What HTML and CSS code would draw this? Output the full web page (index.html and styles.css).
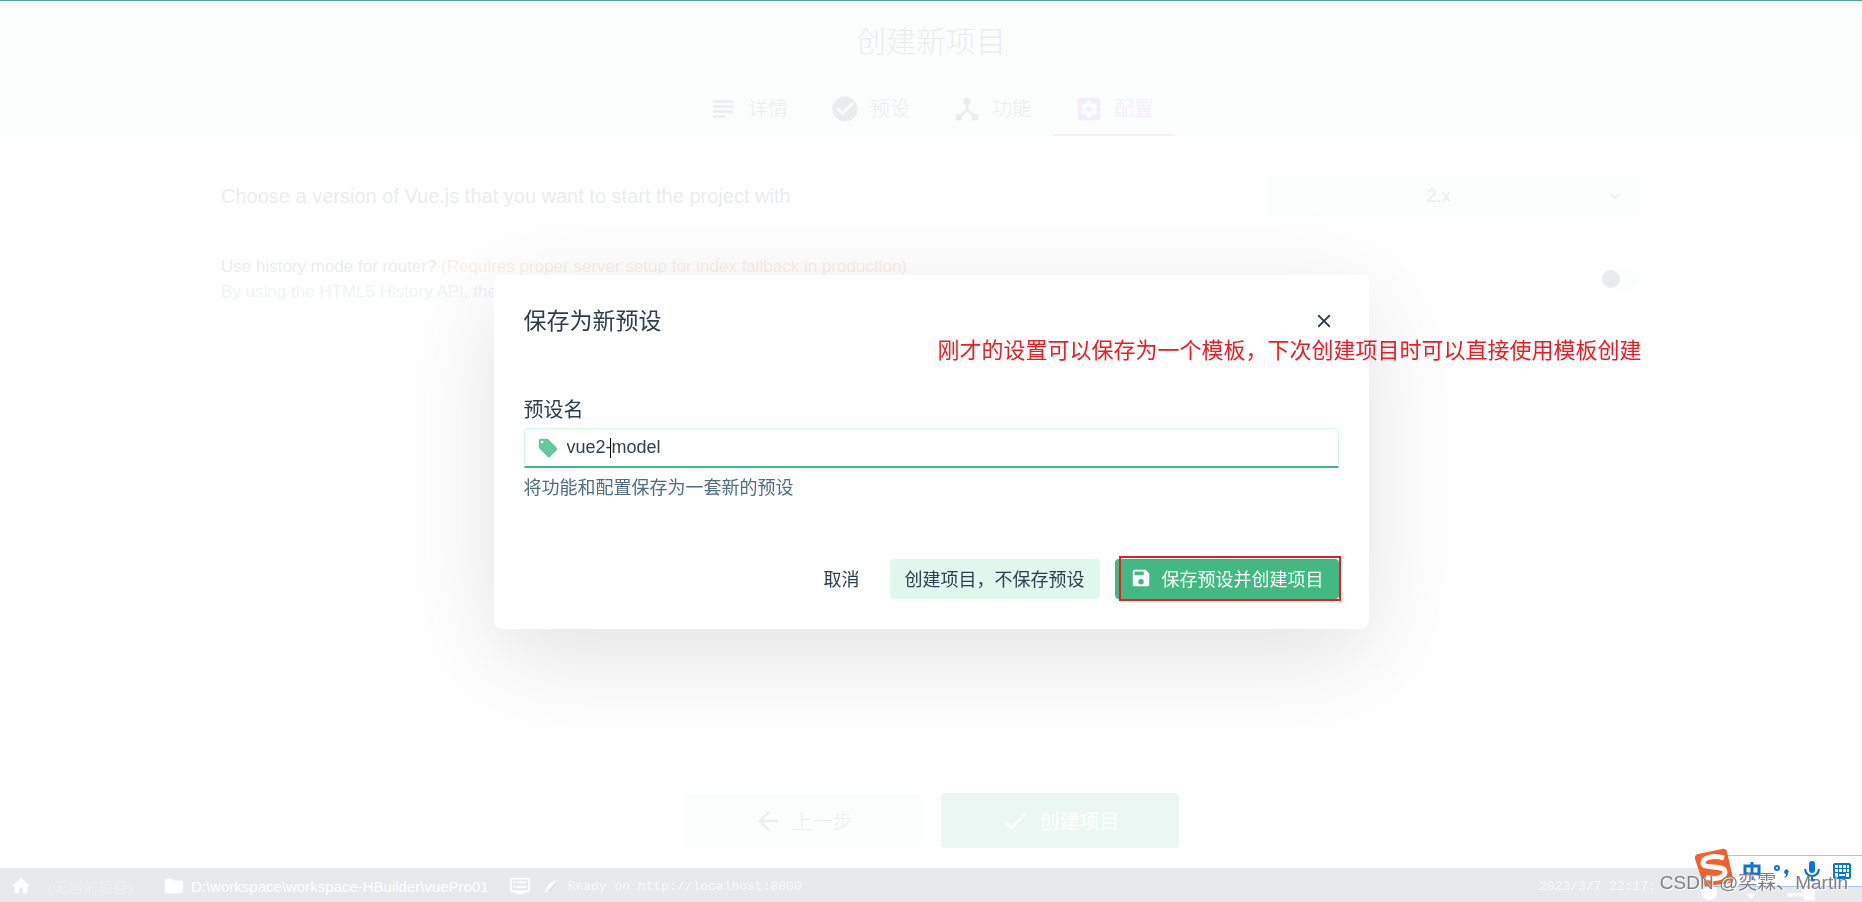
FILE: index.html
```html
<!DOCTYPE html>
<html lang="zh-CN">
<head>
<meta charset="utf-8">
<title>创建新项目</title>
<link rel="stylesheet" href="styles.css">
</head>
<body>
<div class="app">
  <header class="header">
    <h1 class="title">创建新项目</h1>
    <nav class="tabs">
      <button class="tab" type="button"><svg class="icon-lg" viewBox="0 0 24 24"><path d="M4 5h16v2H4zM4 9h16v2H4zM4 13h16v2H4zM4 17h10v2H4z"/></svg><span>详情</span></button>
      <button class="tab" type="button"><svg class="icon-lg" viewBox="0 0 24 24"><path d="M12 2a10 10 0 1 0 0 20 10 10 0 0 0 0-20zm-2 15l-5-5 1.410-1.410L10 14.170l7.590-7.590L19 8z"/></svg><span>预设</span></button>
      <button class="tab" type="button"><svg class="icon-lg" viewBox="0 0 24 24"><path d="M17 16l-4-4V8.820C14.160 8.400 15 7.300 15 6c0-1.660-1.340-3-3-3S9 4.340 9 6c0 1.300.84 2.400 2 2.820V12l-4 4H3v5h5v-3.050l4-4.200 4 4.200V21h5v-5h-4z"/></svg><span>功能</span></button>
      <button class="tab tab-active" type="button"><svg class="icon-lg" viewBox="0 0 24 24"><path d="M12 10a2 2 0 1 0 0 4 2 2 0 0 0 0-4zm7-7H5a2 2 0 0 0-2 2v14a2 2 0 0 0 2 2h14a2 2 0 0 0 2-2V5a2 2 0 0 0-2-2zm-1.750 9c0 .23-.02.46-.05.68l1.480 1.160c.13.11.17.3.08.45l-1.400 2.420c-.09.15-.27.21-.43.15l-1.740-.7c-.36.28-.76.51-1.180.69l-.26 1.850c-.03.17-.18.3-.35.3h-2.800c-.17 0-.32-.13-.35-.29l-.26-1.850c-.43-.18-.82-.41-1.180-.69l-1.740.7c-.16.06-.34 0-.43-.15l-1.400-2.420a.35.35 0 0 1 .08-.45l1.480-1.160c-.03-.23-.05-.46-.05-.69s.02-.46.05-.68l-1.480-1.160a.35.35 0 0 1-.08-.45l1.400-2.420c.09-.15.27-.21.43-.15l1.740.7c.36-.28.76-.51 1.180-.69l.26-1.850c.03-.17.18-.3.35-.3h2.800c.17 0 .32.13.35.29l.26 1.850c.43.18.82.41 1.180.69l1.740-.7c.16-.06.34 0 .43.15l1.400 2.420c.09.15.05.34-.08.45l-1.480 1.160c.03.23.05.46.05.69z"/></svg><span>配置</span></button>
    </nav>
  </header>

  <main class="content">
    <div class="prompt">
      <label class="prompt-title" for="version">Choose a version of Vue.js that you want to start the project with</label>
      <div class="select-wrap">
        <select class="select" id="version"><option>2.x</option></select>
        <svg class="select-arrow" viewBox="0 0 24 24"><path d="M7.400 8.600L12 13.200l4.600-4.600L18 10l-6 6-6-6z"/></svg>
      </div>
    </div>
    <div class="prompt">
      <label class="prompt-text" for="history">
        <span class="line">Use history mode for router? <span class="warn">(Requires proper server setup for index fallback in production)</span></span>
        <span class="line muted">By using the HTML5 History API, the</span>
      </label>
      <input class="switch" type="checkbox" id="history">
    </div>
  </main>

  <div class="actions">
    <button class="big-button" type="button"><svg class="icon-lg" viewBox="0 0 24 24"><path d="M20 11H7.830l5.590-5.590L12 4l-8 8 8 8 1.410-1.410L7.830 13H20z"/></svg><span>上一步</span></button>
    <button class="big-button big-primary" type="button"><svg class="icon-lg" viewBox="0 0 24 24"><path d="M9 16.170L4.830 12l-1.420 1.410L9 19 21 7l-1.410-1.410z"/></svg><span>创建项目</span></button>
  </div>

  <footer class="status">
    <svg class="icon-md" viewBox="0 0 24 24"><path d="M10 20v-6h4v6h5v-8h3L12 3 2 12h3v8z"/></svg>
    <span class="no-project">(无当前项目)</span>
    <svg class="icon-md" viewBox="0 0 24 24"><path d="M10 4H4a2 2 0 0 0-2 2v12a2 2 0 0 0 2 2h16a2 2 0 0 0 2-2V8a2 2 0 0 0-2-2h-8z"/></svg>
    <span class="path">D:\workspace\workspace-HBuilder\vuePro01</span>
    <svg class="icon-md" viewBox="0 0 24 24"><path fill-rule="evenodd" d="M21 3H3a2 2 0 0 0-2 2v12a2 2 0 0 0 2 2h5v2h8v-2h5a2 2 0 0 0 2-2V5a2 2 0 0 0-2-2zm0 14H3V5h18zM5 7h2v2H5zM8 7h11v2H8zM5 12h2v2H5zM8 12h11v2H8z"/></svg>
    <svg class="pen" viewBox="0 0 16 16"><path class="pen-edge" d="M15 1L8 4 3 10l2 3z"/><path class="pen-body" d="M15 1L5 13l2 1 6-7z"/><path class="pen-tip" d="M3 10l-2 4 3 1 3-1z"/></svg>
    <span class="mono">Ready on http://localhost:8000</span>
    <span class="mono date">2023/3/7 22:17:</span>
    <div class="status-icons">
      <svg class="icon-md" viewBox="0 0 24 24"><path d="M12 3a9 9 0 1 0 0 18 9 9 0 0 0 0-18z"/></svg>
      <svg class="icon-md" viewBox="0 0 24 24"><path d="M12 20l-5-6h10z"/></svg>
      <svg class="icon-wide" viewBox="0 0 48 24"><path d="M6 13h16V8h14v13H24v-4H6z"/></svg>
    </div>
  </footer>
</div>

<div class="overlay">
  <section class="modal" role="dialog" aria-labelledby="modal-title">
    <div class="modal-head">
      <h2 class="modal-title" id="modal-title">保存为新预设</h2>
      <button class="close" type="button" aria-label="关闭"><svg class="icon-md" viewBox="0 0 24 24"><path d="M19 6.410L17.590 5 12 10.590 6.410 5 5 6.410 10.590 12 5 17.590 6.410 19 12 13.410 17.590 19 19 17.590 13.410 12z"/></svg></button>
    </div>
    <div class="field">
      <label class="field-label" for="preset">预设名</label>
      <div class="input-box">
        <svg class="icon-md tag" viewBox="0 0 24 24"><path d="M21.410 11.580l-9-9A2 2 0 0 0 11 2H4a2 2 0 0 0-2 2v7c0 .55.22 1.050.59 1.420l9 9a2 2 0 0 0 2.820 0l7-7a2 2 0 0 0 0-2.840zM5.500 7a1.500 1.500 0 1 1 0-3 1.500 1.500 0 0 1 0 3z"/></svg>
        <input class="input" id="preset" type="text" value="vue2-model">
        <span class="caret"></span>
      </div>
      <p class="hint">将功能和配置保存为一套新的预设</p>
    </div>
    <div class="modal-actions">
      <button class="button flat" type="button">取消</button>
      <button class="button soft" type="button">创建项目，不保存预设</button>
      <button class="button primary" type="button"><svg class="icon-md" viewBox="0 0 24 24"><path d="M17 3H5a2 2 0 0 0-2 2v14a2 2 0 0 0 2 2h14a2 2 0 0 0 2-2V7zm-5 16a3 3 0 1 1 0-6 3 3 0 0 1 0 6zm3-10H5V5h10z"/></svg><span>保存预设并创建项目</span><span class="mark"></span></button>
    </div>
    <p class="note">刚才的设置可以保存为一个模板，下次创建项目时可以直接使用模板创建</p>
  </section>
</div>

<div class="ime">
  <svg class="ime-logo" viewBox="0 0 40 40"><path class="logo-bg" d="M4 6L28 1q4-1 5 3l6 26q1 4-3 5L14 38q-4 1-5-3L1 11q-1-4 3-5z"/><path class="logo-s" d="M30 10C20 7 9 9 9 15C9 22 31 16 31 24C31 30 21 32 12 29"/></svg>
  <svg class="ime-icon" viewBox="0 0 20 20"><path class="stroke" d="M3 5h14v8H3zM10 1v18"/></svg>
  <svg class="ime-icon" viewBox="0 0 20 20"><circle class="stroke thin" cx="5" cy="7" r="2"/><path d="M13 9a2 2 0 1 1 3 3q0 4-4 5 2-2 2-4-2 0-2-2z"/></svg>
  <svg class="ime-icon" viewBox="0 0 20 20"><rect x="7" y="0" width="6" height="12" rx="3"/><path class="stroke thin" d="M3 8q1 7 7 7t7-7M10 15v4M7 19h6"/></svg>
  <svg class="ime-icon" viewBox="0 0 20 20"><path fill-rule="evenodd" d="M3 2h14a2 2 0 0 1 2 2v12a2 2 0 0 1-2 2H3a2 2 0 0 1-2-2V4a2 2 0 0 1 2-2zM3 4v3h3V4zM7 4v3h3V4zM11 4v3h3V4zM15 4v3h2V4zM3 8v3h3V8zM7 8v3h3V8zM11 8v3h3V8zM15 8v3h2V8zM3 12v4h3v-4zM7 13v2h6v-2zM14 12v4h3v-4z"/></svg>
</div>
<div class="watermark">CSDN @奕霖、Martin</div>
</body>
</html>
```

FILE: styles.css
```css
* { box-sizing: border-box; }

body {
  margin: 0;
  background: #fff;
  color: #ebecee;
  font-family: "Liberation Sans", "Noto Sans CJK SC", sans-serif;
  font-size: 18px;
}

button, input, select {
  margin: 0;
  border: 0;
  font: inherit;
  color: inherit;
  background: none;
}

h1, h2, p { margin: 0; font-weight: 300; }

svg { flex: none; fill: currentColor; }

.icon-lg { width: 30px; height: 30px; }
.icon-md { width: 22px; height: 22px; }
.icon-wide { width: 44px; height: 22px; }

.app {
  display: flex;
  flex-direction: column;
  min-height: 100vh;
}

.header {
  display: flex;
  flex-direction: column;
  align-items: center;
  gap: 20px;
  padding-top: 19px;
  border-top: 1px solid #4da0a0;
  background: #fbfdfc;
}

.title { font-size: 30px; line-height: 44px; }

.tabs { display: flex; }

.tab {
  display: flex;
  align-items: center;
  gap: 10px;
  padding: 10px 21px;
  border-bottom: 2px solid transparent;
  font-size: 20px;
  font-weight: 300;
  line-height: 30px;
}

.tab-active { color: #f4ebfd; border-color: #f6f0fd; }

.content {
  display: flex;
  flex: 1;
  flex-direction: column;
  gap: 38px;
  width: 100%;
  max-width: 1420px;
  margin: 0 auto;
  padding-top: 40px;
}

.prompt {
  display: flex;
  align-items: center;
  justify-content: space-between;
}

.prompt-title { font-size: 20px; }
.prompt-text { font-size: 17px; line-height: 25px; white-space: nowrap; }
.line { display: block; }
.warn { color: #fdefe6; }
.muted { color: #f0f3f6; }

.select-wrap { position: relative; width: 375px; }

.select {
  width: 100%;
  height: 40px;
  padding: 0 44px 0 14px;
  border-radius: 4px;
  background: #fcfefd;
  text-align-last: center;
  appearance: none;
}

.select-arrow {
  position: absolute;
  top: 10px;
  right: 16px;
  width: 20px;
  height: 20px;
}

.switch {
  display: flex;
  align-items: center;
  width: 40px;
  height: 20px;
  padding: 0 1px;
  border-radius: 10px;
  background: #fbfefd;
  appearance: none;
}

.switch::before {
  width: 18px;
  height: 18px;
  border-radius: 50%;
  background: #e9eaec;
  content: "";
}

.actions {
  display: flex;
  justify-content: center;
  gap: 19px;
  padding-bottom: 20px;
}

.big-button {
  display: flex;
  align-items: center;
  justify-content: center;
  gap: 10px;
  width: 238px;
  height: 55px;
  border-radius: 4px;
  background: #fcfefd;
  font-size: 20px;
  font-weight: 300;
}

.big-primary { background: #ebf7f2; color: #fff; font-weight: 400; }

.status {
  display: flex;
  align-items: center;
  height: 34px;
  padding: 2px 12px 0 10px;
  background: #e8e9eb;
  color: #fff;
  font-size: 15px;
}

.no-project { margin: 0 30px 0 16px; color: #eff0f1; }
.path { margin: 0 20px 0 6px; }
.pen { width: 15px; height: 15px; margin: 0 10px 0 12px; }
.pen-edge { fill: #fff; }
.pen-body { fill: #d6e4f3; }
.pen-tip { fill: #faf6dc; }

.mono {
  color: #f9f9fa;
  font-family: "Liberation Mono", monospace;
  font-size: 13px;
}

.date { margin-left: auto; }
.status-icons { display: flex; gap: 20px; margin: 12px 24px 0 42px; }

.overlay {
  position: fixed;
  inset: 0;
  display: grid;
  place-items: center;
  padding-top: 2px;
}

.modal {
  position: relative;
  width: 875px;
  max-width: 100%;
  padding: 30px;
  border-radius: 8px;
  background: #fff;
  box-shadow: 0 25px 100px rgba(0, 0, 0, 0.12);
  color: #2c3e50;
}

.modal-head {
  display: flex;
  align-items: center;
  justify-content: space-between;
}

.modal-title { font-size: 23px; font-weight: 400; line-height: 32px; }

.close {
  display: grid;
  place-items: center;
  width: 30px;
  height: 30px;
  padding: 0;
}

.field { padding: 58px 0 57px; }
.field-label { display: block; font-size: 20px; line-height: 30px; }

.input-box {
  position: relative;
  display: flex;
  align-items: center;
  gap: 8px;
  height: 40px;
  margin-top: 3px;
  padding: 0 12px;
  border: 1px solid #d9f5e8;
  border-bottom: 2px solid #42b983;
  border-radius: 4px 4px 0 0;
}

.tag { color: #68c79e; }
.input { flex: 1; height: 36px; padding: 0; outline: 0; }

.caret {
  position: absolute;
  top: 9px;
  left: 85px;
  width: 1px;
  height: 20px;
  background: #000;
}

.hint { margin-top: 6px; color: #4e6e80; font-weight: 400; line-height: 28px; }

.modal-actions { display: flex; justify-content: flex-end; gap: 15px; }

.button {
  display: flex;
  align-items: center;
  justify-content: center;
  gap: 10px;
  height: 40px;
  padding: 0 15px 2px;
  border-radius: 4px;
  white-space: nowrap;
}

.soft { background: #e0f8ed; }
.primary { position: relative; background: #42b983; color: #fff; }

.mark {
  position: absolute;
  inset: -3px -2px -2px 4px;
  border: 2px solid #ed1c24;
}

.note {
  position: absolute;
  top: 60px;
  left: 444px;
  color: #ed1c24;
  font-size: 22px;
  font-weight: 400;
  line-height: 32px;
  white-space: nowrap;
}

.ime {
  position: fixed;
  right: 0;
  bottom: 15px;
  display: flex;
  align-items: center;
  gap: 10px;
  height: 32px;
  padding-right: 10px;
  border: solid #a9c6e6;
  border-width: 1px 0;
  background: #fff;
  color: #0a72d8;
}

.ime-logo { width: 40px; height: 40px; margin: -6px -2px 0 -8px; }
.logo-bg { fill: #f4602b; }
.logo-s { fill: none; stroke: #fff; stroke-width: 5; }
.ime-icon { width: 20px; height: 20px; }
.stroke { fill: none; stroke: currentColor; stroke-width: 3; }
.thin { stroke-width: 2; }

.watermark {
  position: fixed;
  right: 14px;
  bottom: 5px;
  color: #808183;
  font-size: 19px;
  line-height: 28px;
  text-shadow: 1px 1px 1px #fff;
}
```
